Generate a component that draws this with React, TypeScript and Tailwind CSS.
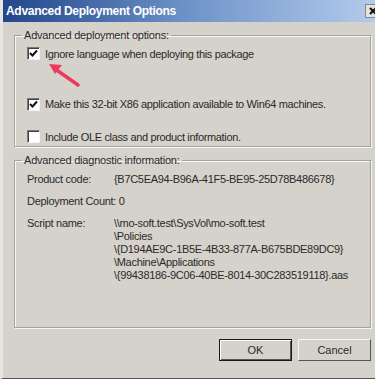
import React from 'react';

const font = { fontFamily: '"Liberation Sans", Arial, sans-serif' };

function CheckBox({ checked }: { checked?: boolean }) {
    return (
        <span className="relative flex h-[13px] w-[13px] shrink-0 items-center justify-center border border-t-[#7a7a7a] border-l-[#7a7a7a] border-r-[#f4f4f4] border-b-[#f4f4f4] bg-white shadow-[inset_1px_1px_0_#404040]">
            {checked && (
                <svg width="9" height="9" viewBox="0 0 9 9">
                    <path d="M1 4 L3.5 6.5 L8 1.5" stroke="#111" strokeWidth="2" fill="none" />
                </svg>
            )}
        </span>
    );
}

function Option({ checked, label }: { checked?: boolean; label: string }) {
    return (
        <div className="flex items-center gap-[5px]">
            <CheckBox checked={checked} />
            <span className="text-[11px] text-[#2a2a2a] tracking-[-0.35px]">{label}</span>
        </div>
    );
}

export default function App() {
    return (
        <div className="relative h-[382px] w-[375px] overflow-hidden bg-white" style={font}>
            <div className="flex h-[379px] flex-col border-l-[3px] border-l-[#e8e6e2] border-b border-b-[#555] bg-[#d5d2cb]">
                {/* Title bar */}
                <div className="flex h-[22px] items-center justify-between bg-gradient-to-r from-[#22468a] via-[#6f93c9] to-[#b3cbeb] pl-[3px]">
                    <span className="text-[12px] font-bold text-white tracking-[-0.3px]">Advanced Deployment Options</span>
                    <span className="mr-[-6px] flex h-[14px] w-[16px] items-center justify-start border border-[#888] bg-[#e4e2dd] pl-[3px]">
                        <svg width="8" height="8" viewBox="0 0 8 8">
                            <path d="M1 1 L7 7 M7 1 L1 7" stroke="#111" strokeWidth="2" />
                        </svg>
                    </span>
                </div>

                <div className="flex flex-1 flex-col pl-[11px] pr-[4px] pt-[5px]">
                    {/* Options group */}
                    <fieldset className="h-[120px] border border-[#a5a29c] px-[12px] shadow-[1px_1px_0_#f7f6f3,inset_1px_1px_0_#f7f6f3]">
                        <legend className="ml-[-5px] px-[2px] text-[11px] text-[#2a2a2a] tracking-[-0.2px]">Advanced deployment options:</legend>
                        <div className="flex flex-col pt-[2px]">
                            <Option checked label="Ignore language when deploying this package" />
                            <div className="h-[34px]" />
                            <Option checked label="Make this 32-bit X86 application available to Win64 machines." />
                            <div className="h-[16px]" />
                            <Option label="Include OLE class and product information." />
                        </div>
                    </fieldset>

                    {/* Diagnostic group */}
                    <fieldset className="mt-[5px] h-[176px] border border-[#a5a29c] px-[12px] shadow-[1px_1px_0_#f7f6f3,inset_1px_1px_0_#f7f6f3]">
                        <legend className="ml-[-5px] px-[2px] text-[11px] text-[#2a2a2a] tracking-[-0.2px]">Advanced diagnostic information:</legend>
                        <div className="flex flex-col gap-[9px] pt-[4px] text-[11px] leading-[13px] text-[#2a2a2a] tracking-[-0.3px]">
                            <div className="flex">
                                <span className="w-[87px]">Product code:</span>
                                <span>{'{B7C5EA94-B96A-41F5-BE95-25D78B486678}'}</span>
                            </div>
                            <div>Deployment Count: 0</div>
                            <div className="flex">
                                <span className="w-[87px]">Script name:</span>
                                <span className="flex flex-col">
                                    <span>{'\\\\mo-soft.test\\SysVol\\mo-soft.test'}</span>
                                    <span>{'\\Policies'}</span>
                                    <span>{'\\{D194AE9C-1B5E-4B33-877A-B675BDE89DC9}'}</span>
                                    <span>{'\\Machine\\Applications'}</span>
                                    <span>{'\\{99438186-9C06-40BE-8014-30C283519118}.aas'}</span>
                                </span>
                            </div>
                        </div>
                    </fieldset>

                    {/* Buttons */}
                    <div className="mt-[11px] flex justify-end gap-[6px]">
                        <button className="h-[22px] w-[73px] border border-[#1a1a1a] bg-[#d5d2cb] text-[11px] text-[#2a2a2a] shadow-[inset_1px_1px_0_#fff,inset_-1px_-1px_0_#555]">
                            OK
                        </button>
                        <button className="h-[22px] w-[73px] border border-t-[#f7f6f3] border-l-[#f7f6f3] border-r-[#555] border-b-[#555] bg-[#d5d2cb] text-[11px] text-[#2a2a2a]">
                            Cancel
                        </button>
                    </div>
                </div>
            </div>

            {/* Red annotation arrow */}
            <svg className="absolute left-[44px] top-[60px]" width="40" height="30" viewBox="0 0 40 30">
                <path d="M34 25 L14 11" stroke="#ec3a5e" strokeWidth="3.5" strokeLinecap="round" />
                <path d="M5 4 L18 5 L11 14 Z" fill="#ec3a5e" />
            </svg>
        </div>
    );
}
